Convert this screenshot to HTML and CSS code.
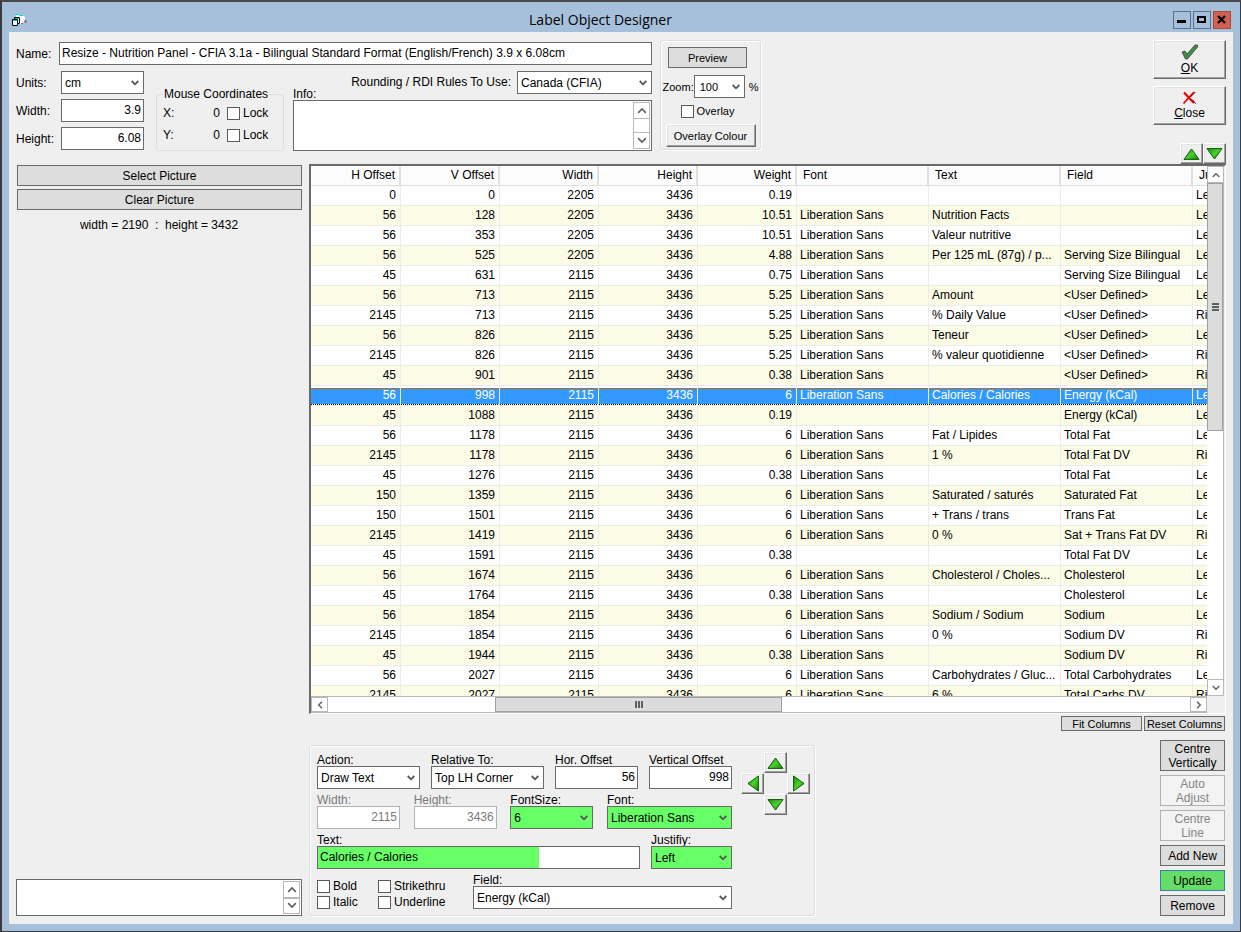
FILE: index.html
```html
<!DOCTYPE html>
<html lang="en">

<head>
  <meta charset="UTF-8">
  <meta name="viewport" content="width=device-width, initial-scale=1.0">
  <title>Label Object Designer</title>
  <link rel="stylesheet" href="styles.css">
</head>

<body>

  <!-- shared arrow shapes -->
  <svg class="defs" width="0" height="0">
    <defs>
      <linearGradient id="green" x1="0" y1="0" x2="1" y2="1">
        <stop offset="0" stop-color="#1c8a10"></stop>
        <stop offset="0.5" stop-color="#4cd02c"></stop>
        <stop offset="1" stop-color="#148008"></stop>
      </linearGradient>
      <symbol id="tri-up" viewBox="0 0 17 12">
        <path d="M8.5 1 L16 11.4 H1 Z" fill="url(#green)" stroke="#0a5c0a"></path>
      </symbol>
      <symbol id="tri-down" viewBox="0 0 17 12">
        <path d="M8.5 11 L16 0.6 H1 Z" fill="url(#green)" stroke="#0a5c0a"></path>
      </symbol>
      <symbol id="tri-left" viewBox="0 0 12 17">
        <path d="M1 8.5 L11.4 1 V16 Z" fill="url(#green)" stroke="#0a5c0a"></path>
      </symbol>
      <symbol id="tri-right" viewBox="0 0 12 17">
        <path d="M11 8.5 L0.6 1 V16 Z" fill="url(#green)" stroke="#0a5c0a"></path>
      </symbol>
      <symbol id="chev-up" viewBox="0 0 8 6">
        <path d="M0.7 5 L4 1.7 L7.3 5" fill="none" stroke="#606060" stroke-width="1.4"></path>
      </symbol>
      <symbol id="chev-down" viewBox="0 0 8 6">
        <path d="M0.7 1 L4 4.3 L7.3 1" fill="none" stroke="#606060" stroke-width="1.4"></path>
      </symbol>
      <symbol id="chev-left" viewBox="0 0 6 8">
        <path d="M5 0.7 L1.7 4 L5 7.3" fill="none" stroke="#606060" stroke-width="1.4"></path>
      </symbol>
      <symbol id="chev-right" viewBox="0 0 6 8">
        <path d="M1 0.7 L4.3 4 L1 7.3" fill="none" stroke="#606060" stroke-width="1.4"></path>
      </symbol>
    </defs>
  </svg>

  <div class="window">
    <div class="titlebar">
      <svg class="app-icon" width="16" height="12" viewBox="0 0 16 12">
        <path d="M3 0 L11 1.500 L13 3 V7 L9 10 H7 Z" fill="#fff"></path>
        <path d="M3 0.500 H7 M7 1.500 H11" stroke="#00e0e0" fill="none"></path>
        <path d="M13 5 L15.500 8.500 H12 Z M9 9 h2 v1 h-2 Z" fill="#777"></path>
        <path d="M2.500 3.500 H7.500 V9.500 H5.500 V11.500 H0.500 V5.500 H2.500 Z" fill="#fff" stroke="#000"></path>
        <path d="M2.500 5.500 H5.500 V9.500" fill="none" stroke="#000"></path>
        <path d="M3 4.500 H7 M1 6.500 H5" stroke="#00c8c8"></path>
      </svg>
      <h1>Label Object Designer</h1>
      <div class="win-buttons">
        <button type="button" aria-label="Minimize">
          <svg width="16" height="16" viewBox="0 0 16 16"><path d="M3 8 h9 v3 h-9 Z" fill="#000"></path></svg>
        </button>
        <button type="button" aria-label="Maximize">
          <svg width="16" height="16" viewBox="0 0 16 16"><path d="M4 5 h7 v5 h-7 Z" fill="none" stroke="#000" stroke-width="2"></path></svg>
        </button>
        <button type="button" class="red" aria-label="Close window">
          <svg width="16" height="16" viewBox="0 0 16 16"><path d="M4 4 L11 11 M11 4 L4 11" stroke="#000" stroke-width="2.2"></path></svg>
        </button>
      </div>
    </div>

    <div class="client">
      <div class="top">
        <div class="details">
          <div class="name-row">
            <label for="name">Name:</label>
            <input id="name" type="text" value="Resize - Nutrition Panel - CFIA 3.1a - Bilingual Standard Format (English/French) 3.9 x 6.08cm">
          </div>
          <div class="details-row">
            <div class="size">
              <label for="units">Units:</label>
              <select id="units"><option>cm</option></select>
              <label for="width">Width:</label>
              <input id="width" class="num" type="text" value="3.9">
              <label for="height">Height:</label>
              <input id="height" class="num" type="text" value="6.08">
            </div>
            <fieldset class="mouse">
              <legend>Mouse Coordinates</legend>
              <div class="coord"><span>X:</span><span class="val">0</span><label><input type="checkbox">Lock</label></div>
              <div class="coord"><span>Y:</span><span class="val">0</span><label><input type="checkbox">Lock</label></div>
            </fieldset>
            <div class="info">
              <div class="rules">
                <label class="info-label" for="info">Info:</label>
                <label for="rules">Rounding / RDI Rules To Use:</label>
                <select id="rules"><option>Canada (CFIA)</option></select>
              </div>
              <div class="memo">
                <textarea id="info"></textarea>
                <div class="mini-scroll">
                  <span><svg width="10" height="7"><use href="#chev-up"></use></svg></span>
                  <span><svg width="10" height="7"><use href="#chev-down"></use></svg></span>
                </div>
              </div>
            </div>
          </div>
        </div>

        <div class="preview group">
          <button type="button" class="btn">Preview</button>
          <div class="zoom">
            <label for="zoom">Zoom:</label>
            <select id="zoom"><option>100</option></select>
            <span>%</span>
          </div>
          <label class="overlay"><input type="checkbox">Overlay</label>
          <button type="button" class="raised">Overlay Colour</button>
        </div>

        <div class="actions">
          <button type="button" class="raised big">
            <svg width="17" height="16" viewBox="0 0 17 16">
              <path d="M1 8 L4 7 L6 10 L14 1 L16.500 1 V3 L6.500 15 L4.500 15 Z" fill="#3f8f3f" stroke="#5a2a5a" stroke-width="0.8"></path>
              <path d="M3.500 9 L5.500 12.500 L15 2" fill="none" stroke="#20a030" stroke-width="1.400"></path>
            </svg>
            <span><u>O</u>K</span>
          </button>
          <button type="button" class="raised big">
            <svg width="15" height="14" viewBox="0 0 15 14">
              <path d="M2 1.500 L12 12" stroke="#f00000" stroke-width="2.200"></path>
              <path d="M12 1 L1.500 12.500" stroke="#f00000" stroke-width="1.800"></path>
              <path d="M13.500 1 L8.500 6 M10 8.500 L14 13" stroke="#400000" stroke-width="0.800"></path>
            </svg>
            <span><u>C</u>lose</span>
          </button>
          <div class="order">
            <button type="button" class="raised arrow" aria-label="Move row up"><svg width="17" height="12"><use href="#tri-up"></use></svg></button>
            <button type="button" class="raised arrow" aria-label="Move row down"><svg width="17" height="12"><use href="#tri-down"></use></svg></button>
          </div>
        </div>
      </div>

      <div class="main">
        <div class="picture">
          <button type="button" class="btn">Select Picture</button>
          <button type="button" class="btn">Clear Picture</button>
          <p>width = 2190 &nbsp;:&nbsp; height = 3432</p>
          <div class="memo notes">
            <textarea aria-label="Notes"></textarea>
            <div class="mini-scroll">
              <span><svg width="10" height="7"><use href="#chev-up"></use></svg></span>
              <span><svg width="10" height="7"><use href="#chev-down"></use></svg></span>
            </div>
          </div>
        </div>

        <div class="objects">
          <div class="list">
            <div class="list-view">
              <table>
                <colgroup>
                  <col class="c-first"><col class="c-num"><col class="c-num"><col class="c-num"><col class="c-num">
                  <col class="c-text"><col class="c-text"><col class="c-text"><col class="c-num">
                </colgroup>
                <thead>
                  <tr><th>H Offset</th><th>V Offset</th><th>Width</th><th>Height</th><th>Weight</th><th>Font</th><th>Text</th><th>Field</th><th>Justify</th></tr>
                </thead>
                <tbody>
                  <tr><td>0</td><td>0</td><td>2205</td><td>3436</td><td>0.19</td><td></td><td></td><td></td><td>Left</td></tr>
                  <tr><td>56</td><td>128</td><td>2205</td><td>3436</td><td>10.51</td><td>Liberation Sans</td><td>Nutrition Facts</td><td></td><td>Left</td></tr>
                  <tr><td>56</td><td>353</td><td>2205</td><td>3436</td><td>10.51</td><td>Liberation Sans</td><td>Valeur nutritive</td><td></td><td>Left</td></tr>
                  <tr><td>56</td><td>525</td><td>2205</td><td>3436</td><td>4.88</td><td>Liberation Sans</td><td>Per 125 mL (87g) / p...</td><td>Serving Size Bilingual</td><td>Left</td></tr>
                  <tr><td>45</td><td>631</td><td>2115</td><td>3436</td><td>0.75</td><td>Liberation Sans</td><td></td><td>Serving Size Bilingual</td><td>Left</td></tr>
                  <tr><td>56</td><td>713</td><td>2115</td><td>3436</td><td>5.25</td><td>Liberation Sans</td><td>Amount</td><td>&lt;User Defined&gt;</td><td>Left</td></tr>
                  <tr><td>2145</td><td>713</td><td>2115</td><td>3436</td><td>5.25</td><td>Liberation Sans</td><td>% Daily Value</td><td>&lt;User Defined&gt;</td><td>Right</td></tr>
                  <tr><td>56</td><td>826</td><td>2115</td><td>3436</td><td>5.25</td><td>Liberation Sans</td><td>Teneur</td><td>&lt;User Defined&gt;</td><td>Left</td></tr>
                  <tr><td>2145</td><td>826</td><td>2115</td><td>3436</td><td>5.25</td><td>Liberation Sans</td><td>% valeur quotidienne</td><td>&lt;User Defined&gt;</td><td>Right</td></tr>
                  <tr><td>45</td><td>901</td><td>2115</td><td>3436</td><td>0.38</td><td>Liberation Sans</td><td></td><td>&lt;User Defined&gt;</td><td>Right</td></tr>
                  <tr class="selected"><td>56</td><td>998</td><td>2115</td><td>3436</td><td>6</td><td>Liberation Sans</td><td>Calories / Calories</td><td>Energy (kCal)</td><td>Left</td></tr>
                  <tr><td>45</td><td>1088</td><td>2115</td><td>3436</td><td>0.19</td><td></td><td></td><td>Energy (kCal)</td><td>Left</td></tr>
                  <tr><td>56</td><td>1178</td><td>2115</td><td>3436</td><td>6</td><td>Liberation Sans</td><td>Fat / Lipides</td><td>Total Fat</td><td>Left</td></tr>
                  <tr><td>2145</td><td>1178</td><td>2115</td><td>3436</td><td>6</td><td>Liberation Sans</td><td>1 %</td><td>Total Fat DV</td><td>Right</td></tr>
                  <tr><td>45</td><td>1276</td><td>2115</td><td>3436</td><td>0.38</td><td>Liberation Sans</td><td></td><td>Total Fat</td><td>Left</td></tr>
                  <tr><td>150</td><td>1359</td><td>2115</td><td>3436</td><td>6</td><td>Liberation Sans</td><td>Saturated / saturés</td><td>Saturated Fat</td><td>Left</td></tr>
                  <tr><td>150</td><td>1501</td><td>2115</td><td>3436</td><td>6</td><td>Liberation Sans</td><td>+ Trans / trans</td><td>Trans Fat</td><td>Left</td></tr>
                  <tr><td>2145</td><td>1419</td><td>2115</td><td>3436</td><td>6</td><td>Liberation Sans</td><td>0 %</td><td>Sat + Trans Fat DV</td><td>Right</td></tr>
                  <tr><td>45</td><td>1591</td><td>2115</td><td>3436</td><td>0.38</td><td></td><td></td><td>Total Fat DV</td><td>Left</td></tr>
                  <tr><td>56</td><td>1674</td><td>2115</td><td>3436</td><td>6</td><td>Liberation Sans</td><td>Cholesterol / Choles...</td><td>Cholesterol</td><td>Left</td></tr>
                  <tr><td>45</td><td>1764</td><td>2115</td><td>3436</td><td>0.38</td><td>Liberation Sans</td><td></td><td>Cholesterol</td><td>Left</td></tr>
                  <tr><td>56</td><td>1854</td><td>2115</td><td>3436</td><td>6</td><td>Liberation Sans</td><td>Sodium / Sodium</td><td>Sodium</td><td>Left</td></tr>
                  <tr><td>2145</td><td>1854</td><td>2115</td><td>3436</td><td>6</td><td>Liberation Sans</td><td>0 %</td><td>Sodium DV</td><td>Right</td></tr>
                  <tr><td>45</td><td>1944</td><td>2115</td><td>3436</td><td>0.38</td><td>Liberation Sans</td><td></td><td>Sodium DV</td><td>Right</td></tr>
                  <tr><td>56</td><td>2027</td><td>2115</td><td>3436</td><td>6</td><td>Liberation Sans</td><td>Carbohydrates / Gluc...</td><td>Total Carbohydrates</td><td>Left</td></tr>
                  <tr><td>2145</td><td>2027</td><td>2115</td><td>3436</td><td>6</td><td>Liberation Sans</td><td>6 %</td><td>Total Carbs DV</td><td>Right</td></tr>
                </tbody>
              </table>
            </div>
            <div class="vscroll">
              <span class="cap"><svg width="8" height="6"><use href="#chev-up"></use></svg></span>
              <div class="track"><div class="thumb"><i></i></div></div>
              <span class="cap"><svg width="8" height="6"><use href="#chev-down"></use></svg></span>
            </div>
            <div class="hscroll">
              <span class="cap"><svg width="6" height="8"><use href="#chev-left"></use></svg></span>
              <div class="track"><div class="thumb"><i></i></div></div>
              <span class="cap"><svg width="6" height="8"><use href="#chev-right"></use></svg></span>
            </div>
          </div>

          <div class="column-buttons">
            <button type="button" class="btn">Fit Columns</button>
            <button type="button" class="btn">Reset Columns</button>
          </div>

          <div class="edit">
            <div class="editor group">
              <div class="fields">
                <div class="frow">
                  <div class="field w103"><label for="action">Action:</label><select id="action"><option>Draw Text</option></select></div>
                  <div class="field w113"><label for="relative">Relative To:</label><select id="relative"><option>Top LH Corner</option></select></div>
                  <div class="field w83"><label for="hor">Hor. Offset</label><input id="hor" class="num" type="text" value="56"></div>
                  <div class="field w83"><label for="vert">Vertical Offset</label><input id="vert" class="num" type="text" value="998"></div>
                </div>
                <div class="frow">
                  <div class="field w83 off"><label for="obj-width">Width:</label><input id="obj-width" class="num" type="text" value="2115" disabled></div>
                  <div class="field w83 off"><label for="obj-height">Height:</label><input id="obj-height" class="num" type="text" value="3436" disabled></div>
                  <div class="field w83"><label for="fontsize">FontSize:</label><select id="fontsize" class="changed"><option>6</option></select></div>
                  <div class="field w125"><label for="font">Font:</label><select id="font" class="changed"><option>Liberation Sans</option></select></div>
                </div>
                <div class="frow">
                  <div class="field grow"><label for="text">Text:</label><input id="text" class="part-changed" type="text" value="Calories / Calories"></div>
                  <div class="field w81"><label for="justify">Justifiy:</label><select id="justify" class="changed"><option>Left</option></select></div>
                </div>
                <div class="frow">
                  <div class="styles">
                    <label><input type="checkbox">Bold</label>
                    <label><input type="checkbox">Strikethru</label>
                    <label><input type="checkbox">Italic</label>
                    <label><input type="checkbox">Underline</label>
                  </div>
                  <div class="field w259"><label for="field">Field:</label><select id="field"><option>Energy (kCal)</option></select></div>
                </div>
              </div>
              <div class="nudge">
                <button type="button" class="raised arrow n-up" aria-label="Nudge up"><svg width="17" height="12"><use href="#tri-up"></use></svg></button>
                <button type="button" class="raised arrow n-left" aria-label="Nudge left"><svg width="12" height="17"><use href="#tri-left"></use></svg></button>
                <button type="button" class="raised arrow n-right" aria-label="Nudge right"><svg width="12" height="17"><use href="#tri-right"></use></svg></button>
                <button type="button" class="raised arrow n-down" aria-label="Nudge down"><svg width="17" height="12"><use href="#tri-down"></use></svg></button>
              </div>
            </div>

            <div class="commands">
              <button type="button" class="btn tall">Centre<br>Vertically</button>
              <button type="button" class="btn tall" disabled>Auto<br>Adjust</button>
              <button type="button" class="btn tall" disabled>Centre<br>Line</button>
              <button type="button" class="btn">Add New</button>
              <button type="button" class="btn update">Update</button>
              <button type="button" class="btn">Remove</button>
            </div>
          </div>
        </div>
      </div>
    </div>
  </div>

</body>

</html>
```
FILE: styles.css
```css
* {
  box-sizing: border-box;
  padding: 0;
  margin: 0;
}

html {
  height: 100%;
}

body {
  height: 100%;
  font-family: "Liberation Sans", Arial, sans-serif;
  font-size: 12px;
  line-height: 14px;
  color: #000;
}

button,
input,
select,
textarea {
  font: inherit;
  color: inherit;
  border-radius: 0;
}

svg {
  display: block;
}

.defs {
  position: absolute;
}

/* window frame */
.window {
  height: 100%;
  min-height: 700px;
  display: flex;
  flex-direction: column;
  padding: 0 7px 7px;
  background-color: #a6c0dc;
  border: 1px solid #3c3c40;
  border-left-width: 2px;
  border-top: 2px solid #4a4a4a;
}

.titlebar {
  height: 30px;
  display: flex;
  align-items: flex-end;
  padding: 0 2px 3px 3px;
}

.app-icon {
  margin-bottom: 3px;
}

.titlebar h1 {
  flex: 1;
  text-align: center;
  font-family: "Open Sans", "Noto Sans", sans-serif;
  font-size: 14px;
  font-weight: normal;
  line-height: 18px;
}

.win-buttons {
  display: flex;
  gap: 2px;
}

.win-buttons button {
  width: 18px;
  height: 18px;
  background-color: #a6c0dc;
  border: 1px solid #56708f;
}

.win-buttons .red {
  background-color: #cf6250;
  border-color: #a84838;
}

.client {
  flex: 1;
  min-height: 0;
  display: flex;
  flex-direction: column;
  padding: 8px 7px;
  background-color: #efefef;
}

/* controls */
input[type="text"],
select,
.memo {
  height: 23px;
  border: 1px solid #6a6a6a;
  background-color: #fff;
}

input[type="text"] {
  width: 100%;
  padding: 0 2px 2px;
}

input.num {
  text-align: right;
}

input[type="text"]:disabled {
  color: #7a7a7a;
  border-color: #adb2b5;
}

input[type="checkbox"] {
  appearance: none;
  flex: none;
  width: 13px;
  height: 13px;
  margin-right: 3px;
  border: 1px solid #5a5a5a;
  background-color: #fff;
}

select {
  appearance: none;
  width: 100%;
  padding: 0 16px 0 3px;
  background-image: url("data:image/svg+xml,%3Csvg xmlns='http://www.w3.org/2000/svg' width='8' height='6' viewBox='0 0 8 6'%3E%3Cpath d='M0.7 1 L4 4.300 L7.3 1' fill='none' stroke='%23555' stroke-width='1.800'/%3E%3C/svg%3E");
  background-repeat: no-repeat;
  background-position: right 4px center;
}

select.changed {
  background-color: #66ff66;
}

textarea {
  flex: 1;
  border: none;
  resize: none;
  background: none;
}

.memo {
  display: flex;
  padding: 1px;
}

.mini-scroll {
  width: 17px;
  display: flex;
  flex-direction: column;
  justify-content: space-between;
  border: 1px solid #b8b8b8;
}

.mini-scroll span {
  height: 16px;
  display: flex;
  align-items: center;
  justify-content: center;
}

.mini-scroll span:first-child {
  border-bottom: 1px solid #b8b8b8;
}

.mini-scroll span:last-child {
  border-top: 1px solid #b8b8b8;
}

.btn {
  height: 21px;
  border: 1px solid #6a6a6a;
  background-color: #dddddd;
}

.btn:disabled {
  color: #858585;
  border-color: #adb2b5;
  background-color: #f3f3f3;
}

.raised {
  border: 1px solid;
  border-color: #fff #6a6a6a #6a6a6a #fff;
  box-shadow: inset -1px -1px #a2a2a2, inset 1px 1px #e3e3e3;
  background-color: #efefef;
}

.arrow {
  width: 23px;
  height: 21px;
  display: flex;
  align-items: center;
  justify-content: center;
}

.group {
  border: 1px solid #d5dfe5;
  border-radius: 3px;
  box-shadow: inset 1px 1px #fff, 1px 1px #fff;
}

/* top area */
.top {
  display: flex;
  gap: 8px;
  height: 124px;
}

.details {
  width: 636px;
  padding-top: 2px;
}

.name-row {
  display: flex;
  align-items: center;
}

.name-row label {
  flex: none;
  width: 43px;
}

.details-row {
  display: flex;
  margin-top: 6px;
}

.size {
  flex: none;
  width: 128px;
  display: grid;
  grid-template-columns: 45px 1fr;
  row-gap: 5px;
  align-items: center;
  align-content: start;
}

.mouse {
  flex: none;
  align-self: flex-start;
  width: 128px;
  height: 64px;
  margin: 16px 9px 0 12px;
  padding: 1px 6px 0;
  border: 1px solid #d5dfe5;
  border-radius: 3px;
}

.mouse legend {
  padding: 0 1px;
}

.coord {
  display: flex;
  align-items: center;
  height: 22px;
}

.coord .val {
  flex: 1;
  text-align: right;
  padding-right: 7px;
}

.coord span:first-child {
  width: 20px;
}

.coord label {
  display: flex;
  align-items: center;
  width: 50px;
}

.info {
  flex: 1;
}

.rules {
  display: flex;
  gap: 6px;
  height: 29px;
  line-height: 23px;
}

.rules .info-label {
  flex: 1;
  align-self: flex-end;
  line-height: 12px;
}

.rules select {
  width: 135px;
}

.info .memo {
  height: 51px;
}

.preview {
  width: 101px;
  height: 110px;
  display: flex;
  flex-direction: column;
  align-items: center;
  padding-top: 6px;
  font-size: 11px;
}

.preview .btn {
  width: 79px;
  margin-right: 6px;
}

.zoom {
  display: flex;
  align-items: center;
  margin-top: 7px;
}

.zoom select {
  width: 51px;
  height: 23px;
  padding-left: 5px;
  margin-right: 4px;
}

.overlay {
  display: flex;
  align-items: center;
  height: 26px;
  margin-right: 6px;
}

.preview .raised {
  width: 90px;
  height: 23px;
}

.actions {
  margin-left: auto;
  display: flex;
  flex-direction: column;
  align-items: flex-end;
}

.big {
  width: 73px;
  height: 39px;
  margin-bottom: 7px;
  display: flex;
  flex-direction: column;
  align-items: center;
  justify-content: center;
  gap: 1px;
}

.order {
  display: flex;
  margin-top: auto;
}

/* main area */
.main {
  flex: 1;
  min-height: 0;
  display: flex;
  gap: 7px;
}

.picture {
  flex: none;
  width: 286px;
  display: flex;
  flex-direction: column;
  gap: 3px;
  padding-top: 1px;
}

.picture .btn {
  margin-left: 1px;
}

.picture p {
  margin-top: 5px;
  text-align: center;
}

.notes {
  height: 37px;
  margin-top: auto;
}

.objects {
  flex: 1;
  min-width: 0;
  display: flex;
  flex-direction: column;
}

.list {
  flex: 1;
  min-height: 0;
  display: grid;
  grid-template-columns: minmax(0, 1fr) 17px;
  grid-template-rows: minmax(0, 1fr) 17px;
  padding-right: 1px;
  border: 2px solid #6a6a6a;
  border-right: 1px solid #fff;
  border-bottom: 1px solid #fff;
}

.list-view {
  overflow: hidden;
  background-color: #fff;
}

table {
  width: 981px;
  table-layout: fixed;
  border-collapse: separate;
  border-spacing: 0;
}

.c-first {
  width: 90px;
}

.c-num {
  width: 99px;
}

.c-text {
  width: 132px;
}

th,
td {
  height: 20px;
  padding: 0 4px 0 3px;
  border-right: 1px solid #ececec;
  border-bottom: 1px solid #ececec;
  text-align: right;
  font-weight: normal;
  line-height: 19px;
  white-space: nowrap;
  overflow: hidden;
}

th {
  border-right: 2px solid #e0e0e0;
  border-bottom: 1px solid #dedede;
  background-color: #fcfcfc;
}

th:nth-child(n+6),
td:nth-child(n+6) {
  text-align: left;
}

th:nth-child(n+6) {
  padding-left: 6px;
}

tbody tr:nth-child(even) {
  background-color: #fbfbe6;
}

/* selected row has a dotted focus line above and below */
tr.selected td {
  color: #fff;
  background:
    repeating-linear-gradient(90deg, #000 0 1px, #fff 1px 2px) 0 18px / 100% 1px no-repeat,
    repeating-linear-gradient(90deg, #cc6600 0 1px, #a07850 1px 2px) 0 2px / 100% 1px no-repeat,
    linear-gradient(#3399ff, #3399ff) 0 2px / 100% 16px no-repeat;
}

.cap {
  flex: none;
  width: 17px;
  height: 17px;
  display: flex;
  align-items: center;
  justify-content: center;
  border: 1px solid #b8b8b8;
  background-color: #fff;
}

.track {
  flex: 1;
  background-color: #fff;
}

.thumb {
  display: flex;
  align-items: center;
  justify-content: center;
  border: 1px solid #a0a0a0;
  background-color: #dcdcdc;
}

.vscroll {
  display: flex;
  flex-direction: column;
  border-right: 1px solid #b8b8b8;
}

.vscroll .thumb {
  width: 100%;
  height: 50%;
}

.vscroll .thumb i {
  width: 7px;
  height: 8px;
  background: repeating-linear-gradient(#606060 0 2px, transparent 2px 3px);
}

.hscroll {
  display: flex;
  border-top: 1px solid #b8b8b8;
  border-bottom: 1px solid #b8b8b8;
}

.hscroll .cap {
  height: 100%;
}

.hscroll .thumb {
  width: 33.3%;
  height: 100%;
  margin-left: 19.4%;
}

.hscroll .thumb i {
  width: 8px;
  height: 7px;
  background: repeating-linear-gradient(90deg, #606060 0 2px, transparent 2px 3px);
}

.column-buttons {
  display: flex;
  justify-content: flex-end;
  gap: 2px;
  padding: 2px 1px 9px;
  font-size: 11px;
}

.column-buttons .btn {
  width: 81px;
  height: 15px;
  line-height: 12px;
}

.edit {
  display: flex;
  justify-content: space-between;
  padding-right: 1px;
}

.editor {
  width: 506px;
  height: 171px;
  display: flex;
  gap: 9px;
  margin-top: 5px;
  padding: 8px 0 0 7px;
}

.fields {
  width: 415px;
  display: flex;
  flex-direction: column;
  gap: 5px;
}

.frow {
  display: flex;
  justify-content: space-between;
}

.field label {
  display: block;
  line-height: 12px;
}

.field.off label {
  color: #7a7a7a;
}

.w81 {
  width: 81px;
}

.w83 {
  width: 83px;
}

.w103 {
  width: 103px;
}

.w113 {
  width: 113px;
}

.w125 {
  width: 125px;
}

.w259 {
  width: 259px;
}

.grow {
  flex: 1;
  margin-right: 11px;
}

input.part-changed {
  background: linear-gradient(#66ff66, #66ff66) 0 0 / 69% 100% no-repeat #fff;
}

.styles {
  display: grid;
  grid-template-columns: 61px 80px;
  grid-auto-rows: 16px;
  align-content: end;
}

.styles label {
  display: flex;
  align-items: flex-end;
  line-height: 13px;
}

.nudge {
  display: grid;
  grid-template-columns: repeat(3, 23px);
  grid-template-rows: repeat(3, 21px);
  margin-top: -2px;
}

.n-up {
  grid-area: 1 / 2;
}

.n-left {
  grid-area: 2 / 1;
}

.n-right {
  grid-area: 2 / 3;
}

.n-down {
  grid-area: 3 / 2;
}

.commands {
  width: 65px;
  display: flex;
  flex-direction: column;
  gap: 4px;
}

.tall {
  height: 31px;
}

.update {
  border-color: #3c7fb1;
  background-color: #66dd66;
}
```
